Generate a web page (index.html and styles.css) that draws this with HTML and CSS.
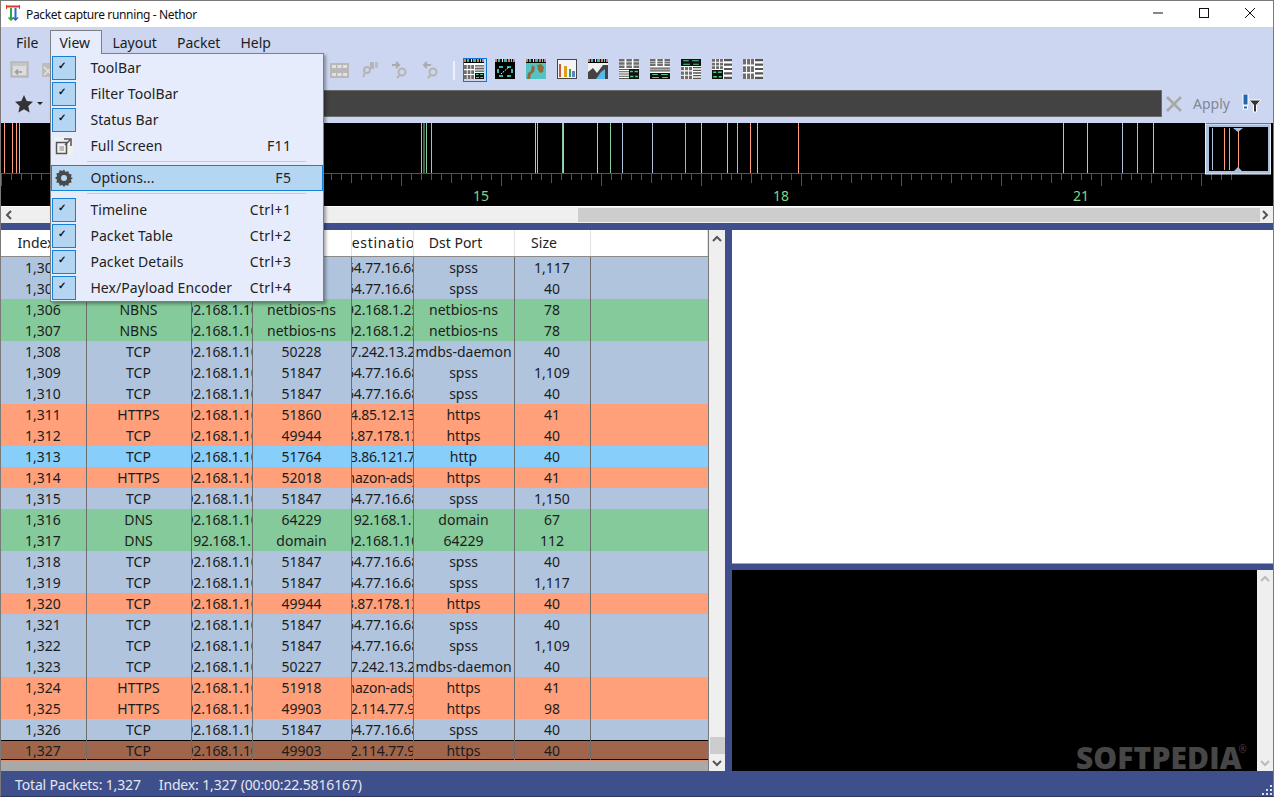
FILE: index.html
```html
<!DOCTYPE html>
<html lang="en">
<head>
<meta charset="utf-8">
<title>Packet capture running - Nethor</title>
<link rel="stylesheet" href="styles.css">
</head>
<body>
<svg class="defs" width="0" height="0" aria-hidden="true">
  <defs>
    <symbol id="strip" viewBox="0 0 20 4" preserveAspectRatio="none">
      <rect width="20" height="3" fill="#111"/>
      <rect x="0" width="2" height="3" fill="#c98a3c"/><rect x="3" width="2" height="3" fill="#3fb7a8"/><rect x="7" width="1" height="3" fill="#e8e8e8"/><rect x="9" width="3" height="3" fill="#3fb7a8"/><rect x="13" width="2" height="3" fill="#c98a3c"/><rect x="16" width="1" height="3" fill="#7fd68f"/><rect x="18" width="2" height="3" fill="#d070c8"/>
      <rect y="3" width="20" height="1" fill="#000"/>
    </symbol>
    <symbol id="cells" viewBox="0 0 9 9" preserveAspectRatio="none">
      <path d="M0 0h2.500v2.500H0zM3.300 0h2.500v2.500H3.300zM6.500 0H9v2.500H6.500zM0 3.300h2.500v2.500H0zM3.300 3.300h2.500v2.500H3.300zM6.500 3.300H9v2.500H6.500zM0 6.500h2.500V9H0zM3.300 6.500h2.500V9H3.300zM6.500 6.500H9V9H6.500z" fill="#6e6e6e"/>
    </symbol>
    <symbol id="lines" viewBox="0 0 9 9" preserveAspectRatio="none">
      <path d="M0 .5h9M0 2.500h9M0 4.500h9M0 6.500h9M0 8.500h9" stroke="#555" stroke-width="1"/>
    </symbol>
    <symbol id="green" viewBox="0 0 9 6" preserveAspectRatio="none">
      <rect width="9" height="6" fill="#111"/>
      <path d="M1 1h2.500v1H1zM5 1h3v1H5zM1 4h3v1H1zM5.500 4H8v1H5.500z" fill="#4fd08a"/>
    </symbol>
  </defs>
</svg>
<div class="app">
  <header class="titlebar">
    <svg class="app-icon" width="16" height="16" viewBox="0 0 16 16">
      <path d="M0 1.500h14" stroke="#e5352b" stroke-width="2"/>
      <path d="M.5 0v4M13.500 0v4" stroke="#e5352b" stroke-width="1"/>
      <path d="M5 3v11" stroke="#2fa83f" stroke-width="2"/>
      <path d="M2.500 12.500L5 15l2.500-2.500" stroke="#2fa83f" stroke-width="1.500" fill="none"/>
      <path d="M9.500 3v11" stroke="#2468d0" stroke-width="2"/>
      <path d="M7 12.500L9.500 15l2.500-2.500" stroke="#2468d0" stroke-width="1.500" fill="none"/>
    </svg>
    <span class="title-text">Packet capture running - Nethor</span>
    <div class="win-buttons">
      <svg class="win-btn" width="12" height="12" viewBox="0 0 12 12"><path d="M1 6h10" stroke="#111"/></svg>
      <svg class="win-btn" width="12" height="12" viewBox="0 0 12 12"><rect x="1.500" y="1.500" width="9" height="9" fill="none" stroke="#111"/></svg>
      <svg class="win-btn" width="12" height="12" viewBox="0 0 12 12"><path d="M1 1l10 10M11 1L1 11" stroke="#111"/></svg>
    </div>
  </header>

  <nav class="menubar">
    <span class="menu-item menu-first">File</span>
    <div class="menu-item menu-open">View
      <div class="dropdown">
        <div class="dd-row"><span class="check">✓</span><span class="dd-label">ToolBar</span></div>
        <div class="dd-row"><span class="check">✓</span><span class="dd-label">Filter ToolBar</span></div>
        <div class="dd-row"><span class="check">✓</span><span class="dd-label">Status Bar</span></div>
        <div class="dd-row">
          <span class="dd-icon"><svg width="20" height="20" viewBox="0 0 20 20"><rect x="1" y="1" width="18" height="18" fill="#f1f1f1"/><rect x="2.500" y="6.500" width="10" height="11" fill="none" stroke="#555" stroke-width="1.500"/><rect x="5.500" y="10" width="4.500" height="5" fill="#bbb"/><path d="M10 3h7v7" fill="none" stroke="#555" stroke-width="1.500"/><path d="M11 9l5-5" stroke="#555" stroke-width="1.500"/></svg></span>
          <span class="dd-label">Full Screen</span><span class="dd-key">F11</span>
        </div>
        <div class="dd-sep"></div>
        <div class="dd-row dd-active">
          <span class="dd-icon"><svg width="20" height="20" viewBox="0 0 20 20"><path d="M10 1.500l1.600 2.400 2.700-.8.700 2.700 2.700.8-.8 2.700L19 10l-2.100 1.700.8 2.700-2.700.7-.7 2.700-2.700-.8L10 19l-1.600-2-2.700.8-.7-2.700-2.700-.7.8-2.700L1 10l2.100-1.700-.8-2.700 2.700-.8.700-2.700 2.700.8z" fill="#4a4a4a"/><circle cx="10" cy="10" r="3" fill="#b5d6f3"/></svg></span>
          <span class="dd-label">Options...</span><span class="dd-key">F5</span>
        </div>
        <div class="dd-sep"></div>
        <div class="dd-row"><span class="check">✓</span><span class="dd-label">Timeline</span><span class="dd-key">Ctrl+1</span></div>
        <div class="dd-row"><span class="check">✓</span><span class="dd-label">Packet Table</span><span class="dd-key">Ctrl+2</span></div>
        <div class="dd-row"><span class="check">✓</span><span class="dd-label">Packet Details</span><span class="dd-key">Ctrl+3</span></div>
        <div class="dd-row"><span class="check">✓</span><span class="dd-label">Hex/Payload Encoder</span><span class="dd-key">Ctrl+4</span></div>
      </div>
    </div>
    <span class="menu-item">Layout</span>
    <span class="menu-item">Packet</span>
    <span class="menu-item">Help</span>
  </nav>

  <div class="toolbar">
    <svg class="tb-dim first" width="20" height="18" viewBox="0 0 20 18"><rect x="1" y="1" width="17" height="15" fill="#c6c6c6" stroke="#a9a9a9"/><rect x="3" y="5" width="13" height="9" fill="#dcdcdc"/><path d="M6 11h6M8 8.500L5.500 11 8 13.500" stroke="#9a9a9a" fill="none" stroke-width="1.500"/></svg>
    <svg class="tb-dim second" width="14" height="18" viewBox="0 0 14 18"><rect x="1" y="2" width="12" height="14" fill="#bdbdbd"/><path d="M3 6l8 8M11 6l-8 8" stroke="#e4e4e4" stroke-width="1.500"/></svg>
    <div class="tb-right">
      <svg class="tb-dim" width="19" height="17" viewBox="0 0 19 17"><rect x="0" y="1" width="19" height="15" fill="#b8b8b8"/><path d="M2 3h4v3H2zM7.500 3h4v3h-4zM13 3h4v3h-4zM2 11h4v3H2zM7.500 11h4v3h-4zM13 11h4v3h-4z" fill="#e2e2e2"/></svg>
      <svg class="tb-dim" width="16" height="18" viewBox="0 0 16 18"><rect x="8" y="1" width="4" height="7" fill="#b5b5b5"/><rect x="13" y="1" width="3" height="6" fill="#bdbdbd"/><circle cx="5" cy="9" r="3" fill="none" stroke="#b5b5b5" stroke-width="2"/><path d="M3 12l-2 4" stroke="#b5b5b5" stroke-width="2"/></svg>
      <svg class="tb-dim" width="18" height="18" viewBox="0 0 18 18"><path d="M1 4h7M5 1l3 3-3 3" stroke="#ababab" stroke-width="2" fill="none"/><circle cx="11" cy="11" r="3.500" fill="none" stroke="#b5b5b5" stroke-width="2"/><path d="M8.500 14l-2.500 3" stroke="#b5b5b5" stroke-width="2"/></svg>
      <svg class="tb-dim" width="18" height="18" viewBox="0 0 18 18"><path d="M9 4H2M5 1L2 4l3 3" stroke="#ababab" stroke-width="2" fill="none"/><circle cx="11" cy="11" r="3.500" fill="none" stroke="#b5b5b5" stroke-width="2"/><path d="M8.500 14l-2.500 3" stroke="#b5b5b5" stroke-width="2"/></svg>
      <span class="tb-sep"></span>
      <span class="view-btn selected"><svg class="thumb" viewBox="0 0 20 20"><rect width="20" height="20" fill="#fff"/><use href="#strip" width="20" height="4"/><use href="#cells" x="0" y="6" width="10" height="14"/><use href="#lines" x="11" y="6" width="9" height="7"/><use href="#green" x="11" y="14" width="9" height="6"/></svg></span>
      <span class="view-btn"><svg class="thumb" viewBox="0 0 20 20"><rect width="20" height="20" fill="#000"/><use href="#strip" width="20" height="4"/><path d="M4 7h4v2H4zM12 7h4v2h-4zM4 16h4v2H4zM12 16h4v2h-4zM2 10h2v4H2zM16 10h2v4h-2z" fill="#35b8b0"/><path d="M6 15l8-7" stroke="#fff" stroke-dasharray="1.500 1"/></svg></span>
      <span class="view-btn"><svg class="thumb" viewBox="0 0 20 20"><rect width="20" height="20" fill="#52c4c4"/><use href="#strip" width="20" height="4"/><path d="M1 20l1-6 3-2 1-6 3 2-1 5-3 2-1 5zM11 6l4-1 3 3-1 5-3 1-2-3z" fill="#8f6a3a"/></svg></span>
      <span class="view-btn"><svg class="thumb" viewBox="0 0 20 20"><rect x=".5" y=".5" width="19" height="19" fill="#f4f4f4" stroke="#444"/><rect x="2" y="5" width="2" height="13" fill="#c0603c"/><rect x="7" y="7" width="3" height="11" fill="#d8a020"/><rect x="12" y="10" width="2" height="8" fill="#3c9a4a"/><rect x="15" y="12" width="3" height="6" fill="#5a80cc"/></svg></span>
      <span class="view-btn"><svg class="thumb" viewBox="0 0 20 20"><rect width="20" height="20" fill="#f0f0f0"/><use href="#strip" width="20" height="4"/><path d="M0 20V13l5-4 4 5 6-8 5 0V20z" fill="#444"/><path d="M8 20l5-7 4-3v10z" fill="#55b8e8"/></svg></span>
      <span class="view-btn"><svg class="thumb" viewBox="0 0 20 20"><rect width="20" height="20" fill="#fff"/><use href="#cells" x="0" y="0" width="20" height="9"/><use href="#lines" x="0" y="10" width="10" height="10"/><use href="#green" x="10" y="10" width="10" height="10"/></svg></span>
      <span class="view-btn"><svg class="thumb" viewBox="0 0 20 20"><rect width="20" height="20" fill="#fff"/><use href="#cells" x="0" y="0" width="20" height="7"/><use href="#lines" x="0" y="8" width="20" height="5"/><use href="#green" x="0" y="14" width="20" height="6"/></svg></span>
      <span class="view-btn"><svg class="thumb" viewBox="0 0 20 20"><rect width="20" height="20" fill="#fff"/><use href="#green" x="0" y="0" width="20" height="7"/><use href="#cells" x="0" y="8" width="11" height="12"/><use href="#lines" x="12" y="8" width="8" height="12"/></svg></span>
      <span class="view-btn"><svg class="thumb" viewBox="0 0 20 20"><rect width="20" height="20" fill="#fff"/><use href="#cells" x="0" y="0" width="11" height="10"/><use href="#green" x="0" y="11" width="11" height="9"/><use href="#lines" x="12" y="0" width="8" height="20"/></svg></span>
      <span class="view-btn"><svg class="thumb" viewBox="0 0 20 20"><rect width="20" height="20" fill="#fff"/><use href="#cells" x="0" y="0" width="11" height="20"/><use href="#lines" x="12" y="0" width="8" height="20"/></svg></span>
    </div>
  </div>

  <div class="filterbar">
    <svg class="star" width="20" height="20" viewBox="0 0 20 20"><path d="M10 1l2.700 6 6.300.7-4.700 4.300 1.300 6.500L10 15.200 4.400 18.500 5.700 12 1 7.700 7.300 7z" fill="#333"/></svg>
    <span class="caret"></span>
    <div class="filter-input"></div>
    <svg class="clear" width="18" height="18" viewBox="0 0 18 18"><path d="M2 2l14 14M16 2L2 16" stroke="#a8a8a8" stroke-width="2.500"/></svg>
    <span class="apply">Apply</span>
    <svg class="funnel" width="20" height="20" viewBox="0 0 20 20"><rect x="1" y="0" width="5" height="11" fill="#2267ac" stroke="#fff"/><rect x="1.500" y="12" width="4" height="3" fill="#2267ac" stroke="#fff"/><path d="M7 6h12l-4.500 5v7h-3v-7z" fill="#333" stroke="#fff"/></svg>
  </div>

  <section class="timeline">
    <svg class="timeline-svg" width="1272" height="83" viewBox="0 0 1272 83">
      <defs>
        <pattern id="t10" width="10" height="20" patternUnits="userSpaceOnUse" x="0" y="50"><rect x="0" width="1" height="7" fill="#1d7a1d"/></pattern>
        <pattern id="t50" width="50" height="20" patternUnits="userSpaceOnUse" x="0" y="50"><rect x="0" width="1" height="10" fill="#1d7a1d"/></pattern>
        <pattern id="t100" width="100" height="20" patternUnits="userSpaceOnUse" x="0" y="50"><rect x="0" width="1" height="13" fill="#1d7a1d"/></pattern>
      </defs>
      <g class="ticks">
        <rect x="0" y="50" width="1232" height="1" fill="#1d7a1d"/>
        <rect x="0" y="50" width="1231" height="14" fill="url(#t10)"/>
        <rect x="0" y="50" width="1231" height="14" fill="url(#t50)"/>
        <rect x="0" y="50" width="1231" height="14" fill="url(#t100)"/>
      </g>
      <g class="bars-orange" transform="translate(-1 0)">
        <path d="M4.500 0v50M12.500 0v50M16.500 0v50M19.500 0v50M421.500 0v50M431.500 0v50M537.500 0v50M737.500 0v50M750.500 0v50M798.500 0v50M1137.500 0v50"/>
      </g>
      <g class="bars-green" transform="translate(-1 0)">
        <path d="M424 0v50M426.500 0v50M610.500 0v50M685.500 0v50M562.500 0v50"/>
      </g>
      <g class="bars-blue" transform="translate(-1 0)">
        <path d="M535.500 0v50M597.500 0v50M622.500 0v50M652.500 0v50M701.500 0v50M727.500 0v50M757.500 0v50M563.500 0v50M1063.500 0v50M1087.500 0v50M1122.500 0v50M1153.500 0v50M1205.500 0v50"/>
      </g>
      <text class="tl-label" x="480" y="78">15</text>
      <text class="tl-label" x="780" y="78">18</text>
      <text class="tl-label" x="1080" y="78">21</text>
      <g class="mini" transform="translate(-1 0)">
        <rect x="1207.500" y="2.500" width="62" height="47" fill="#000" stroke="#a9c1de" stroke-width="3"/>
        <rect x="1205.500" y="1" width="65" height="50" fill="none" stroke="#e9eef6"/>
        <path d="M1212.500 5v42" stroke="#b0c4de"/>
        <path d="M1224.500 5v42M1229.500 5v42M1238.500 5v42" stroke="#ffa07a"/>
        <path d="M1233 5h10l-5 4zM1233 49h10l-5-5z" fill="#a9c1de"/>
      </g>
    </svg>
  </section>

  <div class="hscroll">
    <svg class="arrow" width="10" height="10" viewBox="0 0 10 10"><path d="M7 1L3 5l4 4" fill="none" stroke="#555" stroke-width="2"/></svg>
    <div class="hscroll-track"><div class="hscroll-thumb"></div></div>
    <svg class="arrow" width="10" height="10" viewBox="0 0 10 10"><path d="M3 1l4 4-4 4" fill="none" stroke="#555" stroke-width="2"/></svg>
  </div>

  <main class="workspace">
    <section class="table-pane">
      <div class="table-wrap">
        <div class="tr head">
          <div class="hc">Index</div><div class="hc">Protocol</div><div class="hc">Source</div><div class="hc">Src Port</div><div class="hc nogap">Destination</div><div class="hc">Dst Port</div><div class="hc">Size</div><div class="hc"></div>
        </div>
        <div class="tr tcp"><div>1,304</div><div>TCP</div><div>192.168.1.100</div><div>51847</div><div>64.77.16.68</div><div>spss</div><div>1,117</div><div></div></div>
        <div class="tr tcp"><div>1,305</div><div>TCP</div><div>192.168.1.100</div><div>51847</div><div>64.77.16.68</div><div>spss</div><div>40</div><div></div></div>
        <div class="tr grn"><div>1,306</div><div>NBNS</div><div>192.168.1.100</div><div>netbios-ns</div><div>192.168.1.255</div><div>netbios-ns</div><div>78</div><div></div></div>
        <div class="tr grn"><div>1,307</div><div>NBNS</div><div>192.168.1.100</div><div>netbios-ns</div><div>192.168.1.255</div><div>netbios-ns</div><div>78</div><div></div></div>
        <div class="tr tcp"><div>1,308</div><div>TCP</div><div>192.168.1.100</div><div>50228</div><div>17.242.13.26</div><div>mdbs-daemon</div><div>40</div><div></div></div>
        <div class="tr tcp"><div>1,309</div><div>TCP</div><div>192.168.1.100</div><div>51847</div><div>64.77.16.68</div><div>spss</div><div>1,109</div><div></div></div>
        <div class="tr tcp"><div>1,310</div><div>TCP</div><div>192.168.1.100</div><div>51847</div><div>64.77.16.68</div><div>spss</div><div>40</div><div></div></div>
        <div class="tr org"><div>1,311</div><div>HTTPS</div><div>192.168.1.100</div><div>51860</div><div>54.85.12.134</div><div>https</div><div>41</div><div></div></div>
        <div class="tr org"><div>1,312</div><div>TCP</div><div>192.168.1.100</div><div>49944</div><div>23.87.178.134</div><div>https</div><div>40</div><div></div></div>
        <div class="tr sky"><div>1,313</div><div>TCP</div><div>192.168.1.100</div><div>51764</div><div>93.86.121.70</div><div>http</div><div>40</div><div></div></div>
        <div class="tr org"><div>1,314</div><div>HTTPS</div><div>192.168.1.100</div><div>52018</div><div>amazon-adsyst</div><div>https</div><div>41</div><div></div></div>
        <div class="tr tcp"><div>1,315</div><div>TCP</div><div>192.168.1.100</div><div>51847</div><div>64.77.16.68</div><div>spss</div><div>1,150</div><div></div></div>
        <div class="tr grn"><div>1,316</div><div>DNS</div><div>192.168.1.100</div><div>64229</div><div>192.168.1.1</div><div>domain</div><div>67</div><div></div></div>
        <div class="tr grn"><div>1,317</div><div>DNS</div><div>192.168.1.1</div><div>domain</div><div>192.168.1.100</div><div>64229</div><div>112</div><div></div></div>
        <div class="tr tcp"><div>1,318</div><div>TCP</div><div>192.168.1.100</div><div>51847</div><div>64.77.16.68</div><div>spss</div><div>40</div><div></div></div>
        <div class="tr tcp"><div>1,319</div><div>TCP</div><div>192.168.1.100</div><div>51847</div><div>64.77.16.68</div><div>spss</div><div>1,117</div><div></div></div>
        <div class="tr org"><div>1,320</div><div>TCP</div><div>192.168.1.100</div><div>49944</div><div>23.87.178.134</div><div>https</div><div>40</div><div></div></div>
        <div class="tr tcp"><div>1,321</div><div>TCP</div><div>192.168.1.100</div><div>51847</div><div>64.77.16.68</div><div>spss</div><div>40</div><div></div></div>
        <div class="tr tcp"><div>1,322</div><div>TCP</div><div>192.168.1.100</div><div>51847</div><div>64.77.16.68</div><div>spss</div><div>1,109</div><div></div></div>
        <div class="tr tcp"><div>1,323</div><div>TCP</div><div>192.168.1.100</div><div>50227</div><div>17.242.13.26</div><div>mdbs-daemon</div><div>40</div><div></div></div>
        <div class="tr org"><div>1,324</div><div>HTTPS</div><div>192.168.1.100</div><div>51918</div><div>amazon-adsyst</div><div>https</div><div>41</div><div></div></div>
        <div class="tr org"><div>1,325</div><div>HTTPS</div><div>192.168.1.100</div><div>49903</div><div>52.114.77.96</div><div>https</div><div>98</div><div></div></div>
        <div class="tr tcp"><div>1,326</div><div>TCP</div><div>192.168.1.100</div><div>51847</div><div>64.77.16.68</div><div>spss</div><div>40</div><div></div></div>
        <div class="tr sel"><div>1,327</div><div>TCP</div><div>192.168.1.100</div><div>49903</div><div>52.114.77.96</div><div>https</div><div>40</div><div></div></div>
        <div class="table-rest"></div>
      </div>
      <div class="vscroll table-scroll">
        <svg class="arrow" width="10" height="10" viewBox="0 0 10 10"><path d="M1 7l4-4 4 4" fill="none" stroke="#555" stroke-width="2"/></svg>
        <div class="vspace"></div>
        <div class="vthumb"></div>
        <svg class="arrow" width="10" height="10" viewBox="0 0 10 10"><path d="M1 3l4 4 4-4" fill="none" stroke="#555" stroke-width="2"/></svg>
      </div>
    </section>
    <section class="side-pane">
      <div class="details"></div>
      <div class="hex">
        <div class="hex-view">
          <span class="watermark">SOFTPEDIA<sup class="reg">®</sup></span>
        </div>
        <div class="vscroll hex-scroll">
          <svg class="arrow" width="10" height="10" viewBox="0 0 10 10"><path d="M1 7l4-4 4 4" fill="none" stroke="#bbb" stroke-width="2"/></svg>
          <div class="vspace"></div>
          <svg class="arrow" width="10" height="10" viewBox="0 0 10 10"><path d="M1 3l4 4 4-4" fill="none" stroke="#bbb" stroke-width="2"/></svg>
        </div>
      </div>
    </section>
  </main>

  <footer class="statusbar">
    <span>Total Packets: 1,327</span>
    <span>Index: 1,327 (00:00:22.5816167)</span>
    <svg class="grip" width="12" height="12" viewBox="0 0 12 12"><path d="M9 1h2v2H9zM5 5h2v2H5zM9 5h2v2H9zM1 9h2v2H1zM5 9h2v2H5zM9 9h2v2H9z" fill="#dfe3ee"/></svg>
  </footer>
</div>
</body>
</html>
```
FILE: styles.css
```css
* { box-sizing: border-box; }
html, body { margin: 0; padding: 0; height: 100%; overflow: hidden; }
body { font-family: "Noto Sans", "Open Sans", sans-serif; font-size: 14px; color: #1c1c1c; background: #cdd6f0; }
.defs { display: block; height: 0; }
svg { flex: none; }

.app { width: 1274px; height: 797px; display: flex; flex-direction: column; border: 1px solid #7a7a7a; border-bottom-color: #2b3560; background: #cdd6f0; }

.titlebar { height: 26px; flex: none; background: #fff; display: flex; align-items: center; padding-left: 5px; }
.app-icon { margin: -2px 4px 0 0; }
.title-text { font-size: 12px; letter-spacing: -.35px; color: #111; }
.win-buttons { margin: -2px 0 0 auto; display: flex; gap: 34px; padding-right: 17px; }

.menubar { height: 26px; flex: none; display: flex; align-items: flex-end; padding-left: 5px; font-size: 14px; }
.menu-item { height: 23px; padding: 0 10px; line-height: 25px; position: relative; }
.menu-first { padding: 0 12px 0 10px; }
.menu-open { width: 52px; background: #e6ecfb; border: 1px solid #7f7f7f; border-bottom: 0; padding: 0 0 0 8px; z-index: 5; line-height: 24px; }
.dropdown { position: absolute; top: 22px; left: -1px; width: 274px; height: 249px; background: #e6ecfb; border: 1px solid #7f7f7f; padding-top: 1px; box-shadow: 2px 2px 3px rgba(0,0,0,.35); display: flex; flex-direction: column; line-height: normal; }
.menu-open::after { content: ""; position: absolute; left: 0; right: 0; bottom: -1px; height: 2px; background: #e6ecfb; z-index: 2; }
.dd-row { height: 26px; flex: none; display: flex; align-items: center; padding: 0 32px 0 1px; }
.check { width: 24px; height: 24px; flex: none; background: #b5d6f3; border: 1px solid #1480d8; font-size: 10px; line-height: 16px; text-align: center; padding-right: 4px; color: #111; font-weight: 700; }
.dd-icon { width: 24px; height: 24px; flex: none; display: flex; align-items: center; justify-content: center; }
.dd-label { margin: -2px 0 0 14px; color: #222; letter-spacing: .08px; }
.dd-key { margin: -2px 0 0 auto; color: #222; letter-spacing: .4px; }
.dd-sep { height: 1px; flex: none; background: #c5c9d4; margin: 2px 17px 3px 36px; }
.dd-active { background: #b5d6f3; border: 1px solid #1480d8; padding: 0 31px 0 0; }

.toolbar { height: 33px; flex: none; display: flex; align-items: center; padding-left: 9px; }
.tb-dim.first { margin-right: 11px; }
.tb-right { margin: 1px 0 0 275px; display: flex; align-items: center; }
.tb-right .tb-dim { margin-right: 13px; }
.tb-sep { width: 2px; height: 19px; background: #eef0f6; margin: 0 7px 0 0; }
.view-btn { width: 31px; height: 24px; flex: none; display: flex; align-items: flex-start; padding: 1px 0 0 2px; }
.thumb { width: 20px; height: 20px; }
.view-btn.selected .thumb { box-sizing: content-box; padding: 0 2px 2px 0; margin: -1px 0 0 -1px; border: 1px solid #0f78d6; }

.filterbar { height: 35px; flex: none; display: flex; align-items: center; padding-left: 13px; }
.star { margin-right: 3px; }
.caret { width: 0; height: 0; border: 3px solid transparent; border-top: 3px solid #222; border-bottom: 0; margin-right: 10px; }
.filter-input { width: 1109px; height: 27px; background: #434343; border: 1px solid #6a6a6a; }
.clear { margin-left: 3px; }
.apply { margin-left: 10px; color: #7f8798; font-size: 14px; width: 46px; }
.funnel { margin-left: 3px; }

.timeline { height: 83px; flex: none; background: #000; margin-top: 2px; }
.timeline-svg { display: block; }
.bars-orange path { stroke: #ffa07a; fill: none; }
.bars-green path { stroke: #85ca9a; fill: none; }
.bars-blue path { stroke: #b0c4de; fill: none; }
.tl-label { fill: #7fd68f; font-size: 14px; text-anchor: middle; font-family: "Noto Sans", sans-serif; }

.hscroll { height: 17px; flex: none; background: #efefef; border-top: 1px solid #fff; display: flex; align-items: center; padding: 0 3px; }
.hscroll-track { flex: 1; height: 14px; margin: 0 0 0 2px; padding-left: 562px; }
.hscroll-thumb { height: 14px; background: #cdcdcd; }
.arrow { display: block; }

.workspace { flex: 1; min-height: 0; display: flex; background: #3f4f8c; border-top: 7px solid #3f4f8c; }
.table-pane { width: 724px; flex: none; display: flex; }
.table-wrap { width: 708px; flex: none; display: flex; flex-direction: column; background: #a9a9a9; border-right: 1px solid #7a7a7a; overflow: hidden; }
.tr { display: grid; grid-template-columns: 86px 105px 61px 99px 62px 101px 76px 1fr; height: 21px; flex: none; line-height: 21px; }
.tr > div { display: flex; justify-content: center; white-space: nowrap; overflow: hidden; border-right: 1px solid #6d6d6d; padding-right: 1px; }
.tr > div:last-child { border-right: 0; }
.tr > div:nth-child(3), .tr > div:nth-child(5) { letter-spacing: -.22px; padding-right: 0; }
.tr.head { height: 27px; background: #fff; border-bottom: 1px solid #8a8a8a; color: #222; }
.tr.head > .hc { border-right: 1px solid #e2e2e2; line-height: 26px; padding-right: 17px; letter-spacing: 0; }
.tr.head > .hc.nogap { padding-right: 0; letter-spacing: .7px; }
.tr.head > .hc:first-child { padding-left: 2px; }
.tcp { background: #b0c4de; }
.grn { background: #85ca9a; }
.org { background: #ffa07a; }
.sky { background: #87cefa; }
.tr.sel { background: #a0664c; box-shadow: inset 0 1px 0 #000, inset 0 -1px 0 #000, 0 1px 0 #e0906c; height: 20px; margin-bottom: 1px; }
.table-rest { flex: 1; }

.vscroll { background: #efefef; width: 16px; flex: none; display: flex; flex-direction: column; align-items: center; padding: 4px 0 3px; }
.vspace { flex: 1; }
.vthumb { width: 15px; height: 17px; background: #cdcdcd; margin-bottom: 4px; }

.side-pane { flex: 1; min-width: 0; margin-left: 7px; display: flex; flex-direction: column; }
.details { height: 334px; flex: none; background: #fff; border-bottom: 1px solid #a5a5a5; }
.hex { flex: 1; min-height: 0; margin-top: 6px; display: flex; }
.hex-view { flex: 1; background: #000; position: relative; overflow: hidden; }
.hex-scroll { width: 16px; }
.watermark { position: absolute; right: 10px; bottom: -5px; color: #464646; font-family: "Open Sans", sans-serif; font-weight: 800; font-size: 30px; letter-spacing: .1px; line-height: 36px; }
.reg { font-size: 10px; font-weight: 400; vertical-align: 16px; line-height: 0; margin-left: -3px; }

.statusbar { height: 25px; flex: none; background: #3f4f8c; color: #e4e7f0; font-size: 14px; letter-spacing: -.15px; display: flex; align-items: center; gap: 18px; padding: 1px 0 0 14px; position: relative; }
.grip { position: absolute; right: 0; bottom: 0; }
```
